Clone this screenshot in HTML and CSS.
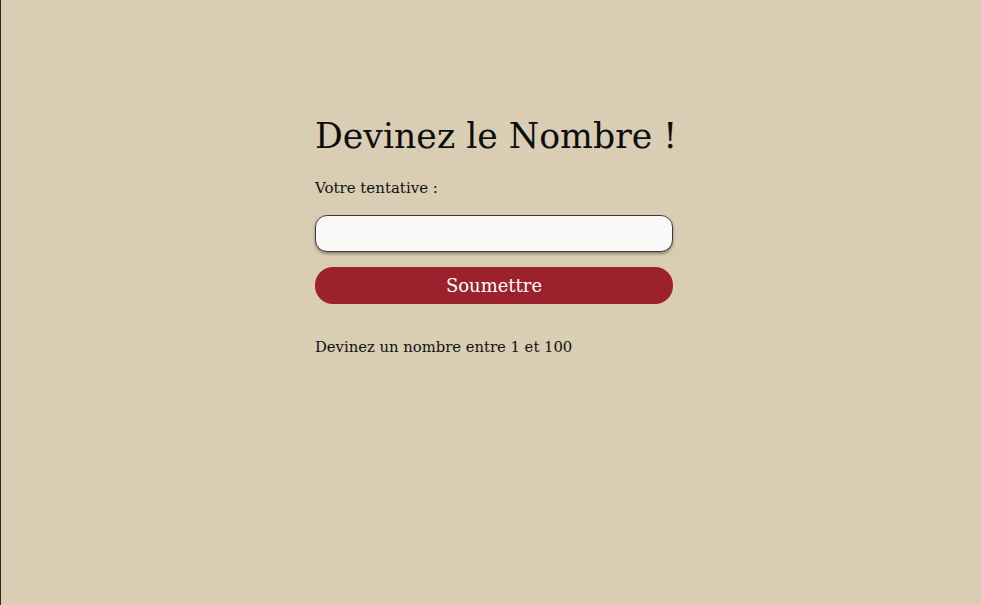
FILE: index.html
```html
<!DOCTYPE html>
<html lang="fr">
<head>
<meta charset="utf-8">
<title>Devinez le Nombre</title>
<link rel="stylesheet" href="styles.css">
</head>
<body>
<main class="game">
  <h1 class="title">Devinez le Nombre !</h1>
  <label class="label" for="guess">Votre tentative :</label>
  <input class="guess" id="guess" type="text">
  <button class="submit" type="button">Soumettre</button>
  <p class="message">Devinez un nombre entre 1 et 100</p>
</main>
</body>
</html>
```
FILE: styles.css
```css
html, body {
  margin: 0;
  height: 100%;
}
body {
  background: #d9cdb3;
  border-left: 1px solid #2a2a2a;
  box-sizing: border-box;
  font-family: "DejaVu Serif", "Liberation Serif", serif;
  color: #111;
}
.game {
  width: 358px;
  margin-left: calc(50% - 176px);
  padding-top: 112px;
  display: flex;
  flex-direction: column;
}
.title {
  margin: 0 0 18px;
  font-size: 34.7px;
  font-weight: 400;
  line-height: 48px;
  white-space: nowrap;
  color: #0d0d0d;
}
.label {
  font-size: 15px;
  line-height: 20px;
  margin-bottom: 17px;
}
.guess {
  height: 37px;
  box-sizing: border-box;
  border: 1px solid #3a3a3a;
  border-radius: 12px;
  background: #fbfaf8;
  box-shadow: 0 2px 3px rgba(0,0,0,0.35);
  margin: 0 0 15px;
  font: inherit;
}
.submit {
  height: 37px;
  border: none;
  border-radius: 18px;
  background: #9b222d;
  color: #fff;
  font-family: inherit;
  font-size: 18px;
  padding: 0;
}
.message {
  margin: 33px 0 0;
  font-size: 14.8px;
  line-height: 20px;
}
```
